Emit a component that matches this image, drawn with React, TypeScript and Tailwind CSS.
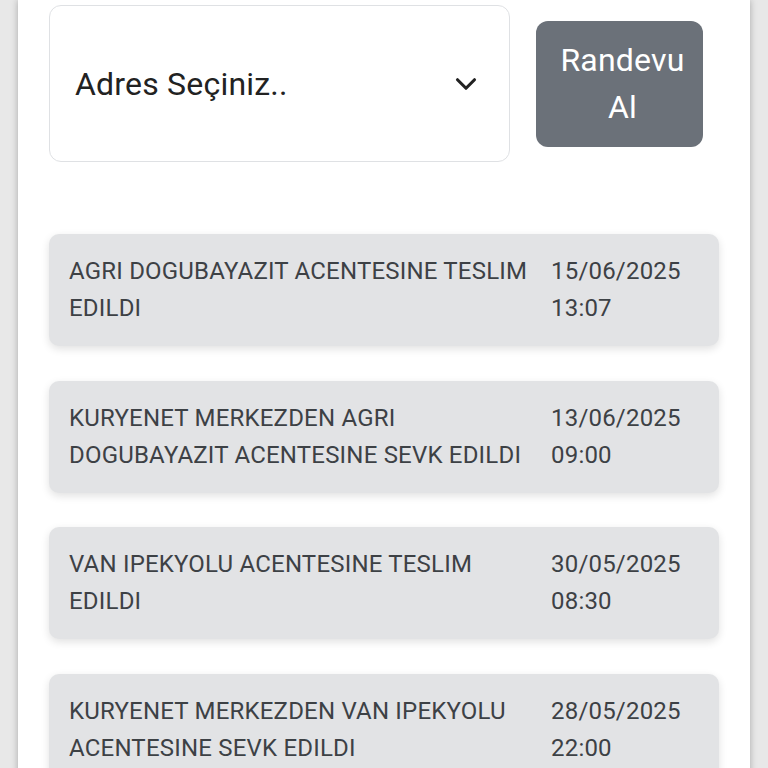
import { ChevronDown } from "lucide-react";

const shipments = [
  { text: "AGRI DOGUBAYAZIT ACENTESINE TESLIM EDILDI", date: "15/06/2025", time: "13:07" },
  { text: "KURYENET MERKEZDEN AGRI DOGUBAYAZIT ACENTESINE SEVK EDILDI", date: "13/06/2025", time: "09:00" },
  { text: "VAN IPEKYOLU ACENTESINE TESLIM EDILDI", date: "30/05/2025", time: "08:30" },
  { text: "KURYENET MERKEZDEN VAN IPEKYOLU ACENTESINE SEVK EDILDI", date: "28/05/2025", time: "22:00" },
];

const App = () => {
  return (
    <div className="min-h-screen bg-[#e8e8e8] px-[18px] font-['Roboto',sans-serif] overflow-hidden">
      <div className="min-h-screen bg-white shadow-[0_0_7px_rgba(0,0,0,0.28)] px-[31px] pt-[5px]">
        <div className="flex items-start">
          <div className="w-[461px] h-[157px] rounded-[12px] border border-[#dfe1e4] flex items-center justify-between pl-[25px] pr-[26px]">
            <span className="text-[32px] text-[#222] tracking-[0.2px]">Adres Seçiniz..</span>
            <ChevronDown className="w-[34px] h-[34px] text-[#222]" strokeWidth={2.2} />
          </div>
          <button className="ml-[26px] mt-[16px] w-[167px] h-[126px] rounded-[12px] bg-[#6b7179] text-white text-[32px] leading-[47px] pl-[22px] pr-[16px] tracking-[0.2px]">
            Randevu Al
          </button>
        </div>

        <div className="mt-[72px] flex flex-col gap-[34.5px]">
          {shipments.map((s) => (
            <div
              key={s.date}
              className="h-[112px] rounded-[10px] bg-[#e2e3e5] shadow-[0_3px_8px_rgba(0,0,0,0.12)] flex items-center pl-[20px] text-[24px] leading-[37px] text-[#3d4145] tracking-[0.2px]"
            >
              <div className="flex-1 pr-[20px]">{s.text}</div>
              <div className="w-[168px] shrink-0">
                <div>{s.date}</div>
                <div>{s.time}</div>
              </div>
            </div>
          ))}
        </div>
      </div>
    </div>
  );
};

export default App;
